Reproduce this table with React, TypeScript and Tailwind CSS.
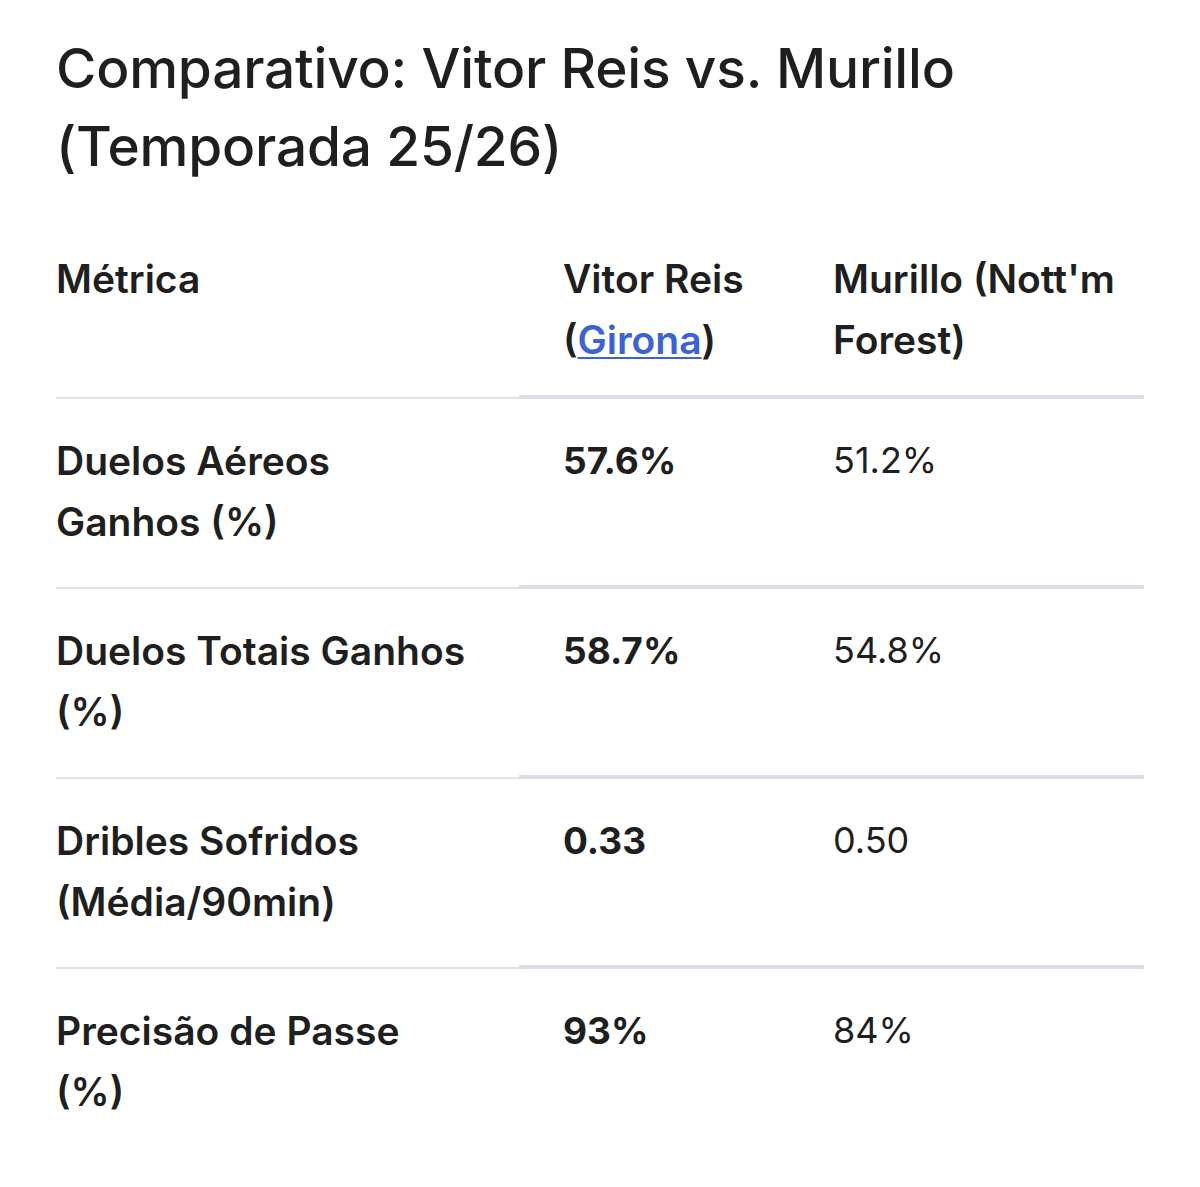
import React from "react";

const rows = [
  { m: ["Duelos Aéreos", "Ganhos (%)"], a: "57.6%", b: "51.2%" },
  { m: ["Duelos Totais Ganhos", "(%)"], a: "58.7%", b: "54.8%" },
  { m: ["Dribles Sofridos", "(Média/90min)"], a: "0.33", b: "0.50" },
  { m: ["Precisão de Passe", "(%)"], a: "93%", b: "84%" },
];

export default function App() {
  return (
    <div
      className="w-[1200px] min-h-[1187px] bg-white text-[#1f1f1f] pl-[56px] pt-[29px]"
      style={{ fontFamily: "Inter, 'Noto Sans', sans-serif" }}
    >
      <h1 className="text-[55px] leading-[78px] font-medium tracking-[-0.2px]">
        Comparativo: Vitor Reis vs. Murillo
        <br />
        (Temporada 25/26)
      </h1>
      <div className="mt-[32px] grid grid-cols-[463px_270px_355px] text-[39px] leading-[61px]">
        <div className="pt-[31px] pb-[25px] border-b-2 border-[#e3e3e6] font-semibold">Métrica</div>
        <div className="pt-[31px] pb-[25px] pl-[44px] border-b-4 border-[#dcdce5] font-semibold">
          Vitor Reis
          <br />(
          <a href="#" className="text-[#3b63d1] underline decoration-2 underline-offset-[3px]">Girona</a>)
        </div>
        <div className="pt-[31px] pb-[25px] pl-[44px] border-b-4 border-[#dcdce5] font-semibold whitespace-nowrap">
          Murillo (Nott'm
          <br />
          Forest)
        </div>
        {rows.map((r, i) => {
          const last = i === rows.length - 1;
          return (
            <React.Fragment key={i}>
              <div className={`pt-[31px] pb-[35px] font-semibold ${last ? "" : "border-b-2 border-[#e3e3e6]"}`}>
                {r.m[0]}
                <br />
                {r.m[1]}
              </div>
              <div className={`pt-[31px] pb-[35px] pl-[44px] font-bold text-[37px] ${last ? "" : "border-b-4 border-[#dcdce5]"}`}>
                {r.a}
              </div>
              <div className={`pt-[31px] pb-[35px] pl-[44px] font-normal text-[36px] ${last ? "" : "border-b-4 border-[#dcdce5]"}`}>
                {r.b}
              </div>
            </React.Fragment>
          );
        })}
      </div>
    </div>
  );
}
